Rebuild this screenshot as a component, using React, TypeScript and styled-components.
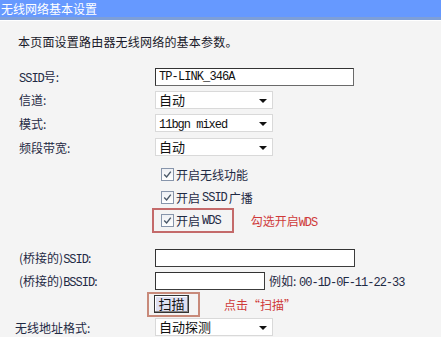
import styled, { createGlobalStyle } from 'styled-components';

const GlobalStyle = createGlobalStyle`
  html, body {
    margin: 0;
    padding: 0;
    background: #f4f4f4;
  }
  body {
    width: 441px;
    height: 337px;
    overflow: hidden;
    font-family: "Noto Sans CJK SC", "DejaVu Sans", sans-serif;
  }
`;

export default function App() {
  return (
    <Page>
      <GlobalStyle />
      <TitleBar>无线网络基本设置</TitleBar>
      <Intro>本页面设置路由器无线网络的基本参数。</Intro>

      <Form>
        <Row $h={23}>
          <Label>
            <Mono>SSID</Mono>号:
          </Label>
          <TextBox $w={199} readOnly defaultValue="TP-LINK_346A" />
        </Row>
        <Row $h={23}>
          <Label>信道:</Label>
          <Select value="自动" />
        </Row>
        <Row $h={24}>
          <Label>模式:</Label>
          <Select value="11bgn mixed" mono />
        </Row>
        <Row $h={24}>
          <Label>频段带宽:</Label>
          <Select value="自动" />
        </Row>

        <Row $h={24} $top={3}>
          <Label />
          <CheckItem>
            <CheckMark />
            开启无线功能
          </CheckItem>
        </Row>
        <Row $h={23}>
          <Label />
          <CheckItem>
            <CheckMark />
            开启<Mono>SSID</Mono>广播
          </CheckItem>
        </Row>
        <Row $h={23}>
          <Label />
          <CheckItem $marked>
            <CheckMark />
            开启<Mono>WDS</Mono>
          </CheckItem>
          <Note $gap={17}>
            勾选开启<Mono>WDS</Mono>
          </Note>
        </Row>

        <Row $h={23} $top={14}>
          <Label>
            (桥接的)<Mono>SSID</Mono>:
          </Label>
          <TextBox $w={200} $dark readOnly defaultValue="" />
        </Row>
        <Row $h={23}>
          <Label>
            (桥接的)<Mono>BSSID</Mono>:
          </Label>
          <TextBox $w={110} $dark readOnly defaultValue="" />
          <Hint>
            例如: <Mono>00-1D-0F-11-22-33</Mono>
          </Hint>
        </Row>
        <Row $h={24}>
          <Label />
          <ScanFrame>
            <ScanButton type="button">扫描</ScanButton>
          </ScanFrame>
          <Note $gap={24}>点击“扫描”</Note>
        </Row>
        <Row $h={22}>
          <Label $shift={-4}>无线地址格式:</Label>
          <Select value="自动探测" />
        </Row>
      </Form>
    </Page>
  );
}

function Select({ value, mono }: { value: string; mono?: boolean }) {
  return (
    <SelectBox>
      {mono ? <Mono>{value}</Mono> : value}
      <Caret />
    </SelectBox>
  );
}

function CheckMark() {
  return (
    <Box>
      <svg width="9" height="9" viewBox="0 0 9 9">
        <path d="M1.2 4.6 L3.6 7 L7.8 1.6" fill="none" stroke="#4a5868" strokeWidth="1.4" />
      </svg>
    </Box>
  );
}

const Page = styled.div`
  width: 441px;
  height: 337px;
  overflow: hidden;
  color: #1f2a44;
  font-size: 12px;
`;

const TitleBar = styled.div`
  height: 17px;
  line-height: 17px;
  padding-left: 1px;
  background: #6699ff;
  color: #fff;
  font-size: 12px;
  border-bottom: 3px solid #7e9fd8;
  box-shadow: 0 1px 0 #fff;
`;

const Intro = styled.div`
  margin: 14px 0 0 18px;
  height: 16px;
  line-height: 16px;
  font-size: 12px;
  letter-spacing: 0.2px;
  color: #1a1a2a;
`;

const Form = styled.div`
  margin-top: 15px;
  padding-left: 19px;
  display: flex;
  flex-direction: column;
`;

const Row = styled.div<{ $h: number; $top?: number }>`
  display: flex;
  align-items: center;
  height: ${p => p.$h}px;
  margin-top: ${p => p.$top ?? 0}px;
`;

const Label = styled.div<{ $shift?: number }>`
  width: 136px;
  flex: none;
  font-size: 12px;
  margin-left: ${p => p.$shift ?? 0}px;
  padding-right: ${p => -(p.$shift ?? 0)}px;
  white-space: nowrap;
`;

const Mono = styled.span`
  font-family: "Liberation Mono", monospace;
  font-size: 12px;
  letter-spacing: -1px;
`;

const TextBox = styled.input<{ $w: number; $dark?: boolean }>`
  box-sizing: border-box;
  width: ${p => p.$w}px;
  height: 18px;
  margin: 0;
  padding: 0 3px;
  background: #fff;
  border: 1px solid ${p => (p.$dark ? '#3c3c3c' : '#6a6a6a')};
  border-top-color: #333;
  border-left-color: #333;
  font-family: "Liberation Mono", monospace;
  font-size: 12px;
  letter-spacing: -0.9px;
  color: #111;
  outline: none;
`;

const SelectBox = styled.div`
  box-sizing: border-box;
  position: relative;
  width: 118px;
  height: 18px;
  line-height: 16px;
  padding-left: 3px;
  background: #fff;
  border: 1px solid #d9d9d9;
  font-size: 13px;
  color: #111;
`;

const Caret = styled.span`
  position: absolute;
  right: 5px;
  top: 7px;
  width: 0;
  height: 0;
  border-left: 4px solid transparent;
  border-right: 4px solid transparent;
  border-top: 4px solid #111;
`;

const CheckItem = styled.div<{ $marked?: boolean }>`
  box-sizing: border-box;
  display: flex;
  align-items: center;
  gap: 2px;
  height: 25px;
  margin-left: -3px;
  padding: 0 11px 0 7px;
  border: 2px solid ${p => (p.$marked ? '#c46a6a' : 'transparent')};
  font-size: 12px;
  white-space: nowrap;
`;

const Box = styled.span`
  box-sizing: border-box;
  width: 13px;
  height: 13px;
  display: inline-flex;
  align-items: center;
  justify-content: center;
  background: linear-gradient(#eef0f4, #ffffff);
  border: 1px solid #8795ab;
`;

const Note = styled.span<{ $gap: number }>`
  margin-left: ${p => p.$gap}px;
  color: #cf3a3a;
  font-size: 12px;
  white-space: nowrap;
`;

const Hint = styled.span`
  margin-left: 4px;
  font-size: 12px;
  color: #1f2a44;
  white-space: nowrap;
`;

const ScanFrame = styled.div`
  box-sizing: border-box;
  display: flex;
  align-items: center;
  height: 25px;
  margin-left: -8px;
  padding: 0 9px 0 5px;
  border: 2px solid #c88a7a;
`;

const ScanButton = styled.button`
  box-sizing: border-box;
  width: 35px;
  height: 18px;
  margin: 0;
  padding: 0;
  background: #dfe0f2;
  border: 1px solid #333;
  box-shadow: inset -1px -1px 0 #888, inset 1px 1px 0 #fff;
  font-family: "Noto Sans CJK SC", sans-serif;
  font-size: 13px;
  line-height: 14px;
  color: #111;
`;
